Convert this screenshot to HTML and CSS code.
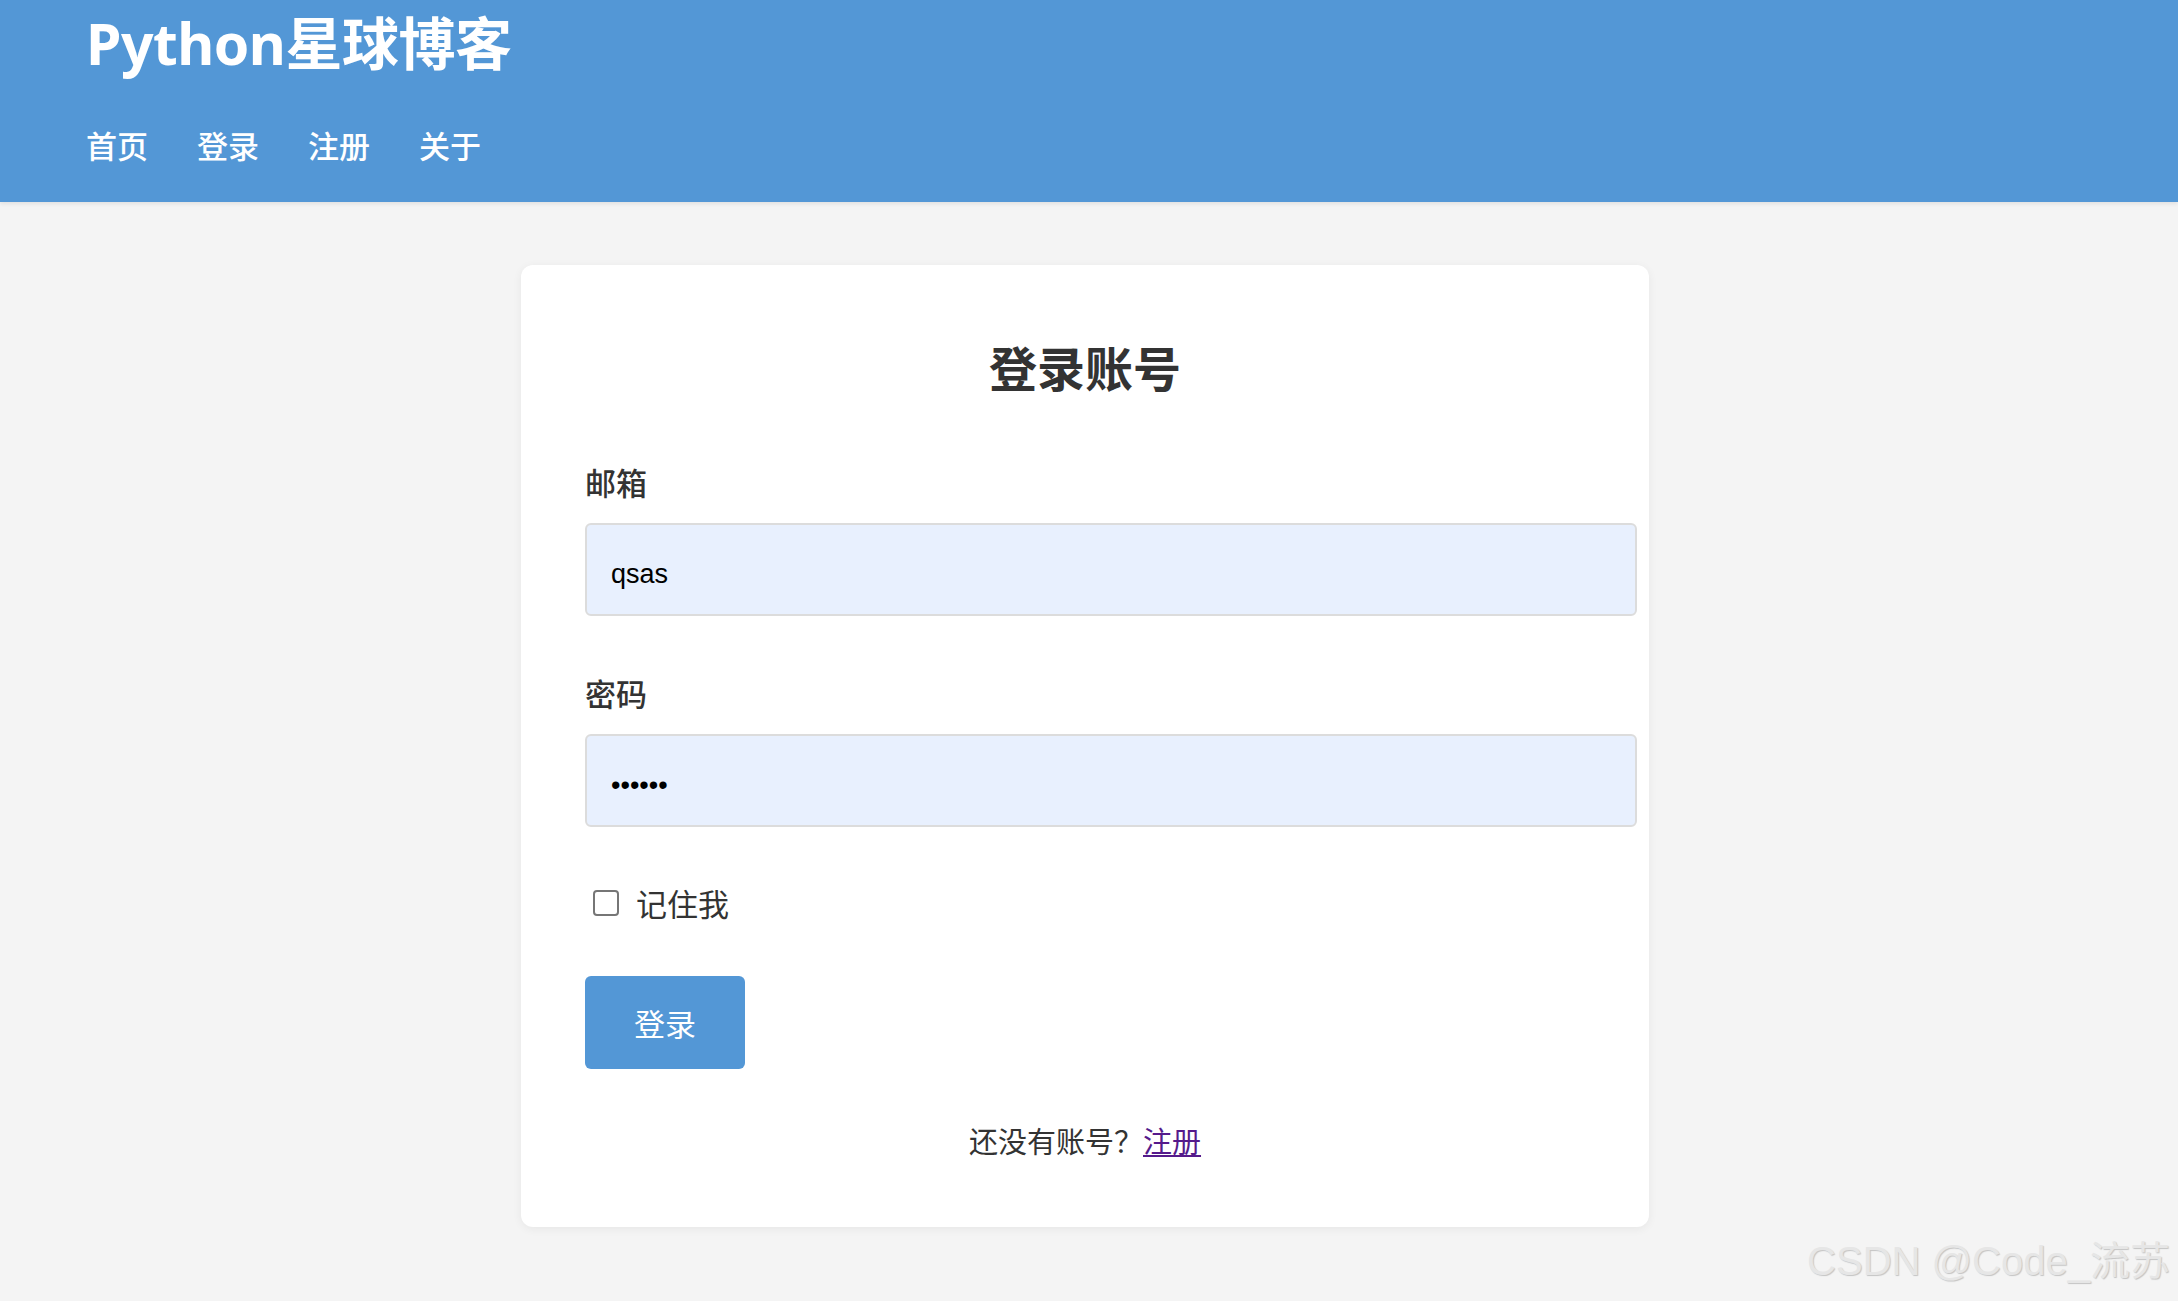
FILE: index.html
```html
<!DOCTYPE html>
<html lang="zh-CN">
<head>
<meta charset="utf-8">
<title>登录 - Python星球博客</title>
<link rel="stylesheet" href="styles.css">
</head>
<body>
<header class="site-header">
  <h1 class="site-title">Python星球博客</h1>
  <nav class="site-nav">
    <a href="#">首页</a>
    <a href="#">登录</a>
    <a href="#">注册</a>
    <a href="#">关于</a>
  </nav>
</header>
<main class="page">
  <section class="card">
    <h2 class="card-title">登录账号</h2>
    <form class="login-form">
      <label class="field-label" for="email">邮箱</label>
      <input class="field-input" id="email" type="text" value="qsas">
      <label class="field-label field-label-gap" for="pwd">密码</label>
      <input class="field-input" id="pwd" type="password" value="123456">
      <div class="remember">
        <span class="checkbox"></span>
        <span class="remember-text">记住我</span>
      </div>
      <button class="submit" type="button">登录</button>
    </form>
    <p class="switch">还没有账号？<a class="switch-link" href="#">注册</a></p>
  </section>
</main>
<div class="watermark">CSDN @Code_流苏</div>
</body>
</html>
```
FILE: styles.css
```css
html, body {
  margin: 0;
  padding: 0;
}
body {
  background: #f4f4f4;
  font-family: "Noto Sans", "Noto Sans CJK SC", sans-serif;
  color: #333;
  min-height: 1301px;
  position: relative;
  overflow: hidden;
}
.site-header {
  background: #5397d6;
  height: 202px;
  box-sizing: border-box;
  padding: 4px 86px 0;
  box-shadow: 0 2px 4px rgba(0,0,0,0.08);
}
.site-title {
  margin: 0;
  font-family: "Noto Sans", "Noto Sans CJK SC", sans-serif;
  font-size: 57px;
  font-weight: 700;
  line-height: 78px;
  color: #fff;
  letter-spacing: -0.5px;
}
.site-nav {
  margin-top: 41px;
  display: flex;
  gap: 49px;
  font-family: "Noto Sans CJK SC", sans-serif;
  font-size: 31px;
  line-height: 44px;
}
.site-nav a {
  color: #fff;
  text-decoration: none;
  font-weight: 500;
}
.page {
  display: flex;
  justify-content: center;
  padding-top: 63px;
}
.card {
  width: 1000px;
  padding: 60px 64px 66px;
  background: #fff;
  border-radius: 12px;
  box-shadow: 0 2px 10px rgba(0,0,0,0.06);
  margin-left: -8px;
}
.card-title {
  margin: 0;
  text-align: center;
  font-family: "Noto Sans CJK SC", sans-serif;
  font-size: 48px;
  font-weight: 700;
  line-height: 82px;
  color: #333;
}
.login-form {
  display: flex;
  flex-direction: column;
  align-items: flex-start;
  margin-top: 53px;
}
.field-label {
  font-family: "Noto Sans CJK SC", sans-serif;
  font-size: 31px;
  font-weight: 500;
  line-height: 44px;
  color: #333;
  margin-bottom: 19px;
}
.field-label-gap {
  margin-top: 55px;
}
.field-input {
  box-sizing: content-box;
  width: 100%;
  height: 79px;
  padding: 10px 24px 0;
  margin: 0;
  border: 2px solid #dcdcdc;
  border-radius: 6px;
  background: #e8f0fe;
  font-family: "Liberation Sans", Arial, sans-serif;
  font-size: 27px;
  color: #000;
  outline: none;
}
.remember {
  display: flex;
  align-items: center;
  margin-top: 54px;
  height: 44px;
}
.checkbox {
  width: 22px;
  height: 22px;
  border: 2px solid #767676;
  border-radius: 4px;
  margin-left: 8px;
  background: #fff;
}
.remember-text {
  margin-left: 17px;
  font-family: "Noto Sans CJK SC", sans-serif;
  font-size: 31px;
  line-height: 44px;
  color: #333;
}
.submit {
  margin-top: 51px;
  width: 160px;
  height: 93px;
  border: none;
  border-radius: 6px;
  background: #5397d6;
  color: #fff;
  font-family: "Noto Sans CJK SC", sans-serif;
  font-size: 31px;
  padding: 0;
}
.switch {
  margin: 50px 0 0;
  text-align: center;
  font-family: "Noto Sans CJK SC", sans-serif;
  font-size: 29px;
  line-height: 42px;
  color: #333;
}
.switch-link {
  color: #551a8b;
  text-decoration: underline;
}
.watermark {
  position: absolute;
  right: 8px;
  bottom: 14px;
  font-family: "Liberation Sans", "Noto Sans CJK SC", sans-serif;
  font-size: 40px;
  color: #e6e6e6;
  text-shadow: 1px 1px 1px #c4c4c4;
}
```
